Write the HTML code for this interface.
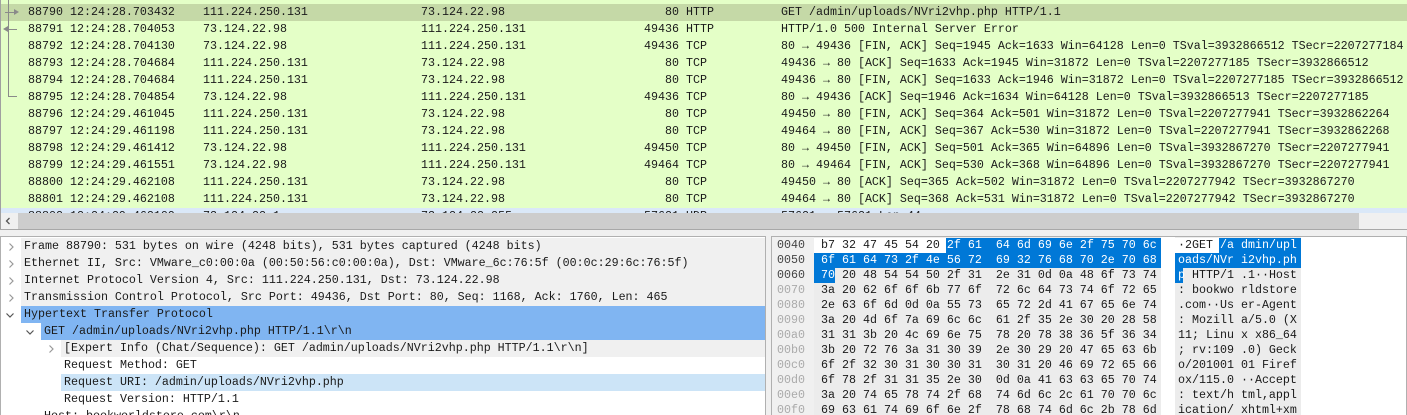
<!DOCTYPE html>
<html><head><meta charset="utf-8"><style>
*{margin:0;padding:0;box-sizing:border-box}
body{width:1407px;height:415px;overflow:hidden;background:#f0f0f0;font-family:"Liberation Mono",monospace;font-size:11.67px;color:#1a1a1a;position:relative}
.a{position:absolute;white-space:pre;line-height:17px}
.pl{position:absolute;left:0;top:0;width:1407px;height:213px;background:#e4ffc7;overflow:hidden;border-left:1px solid #a0a0a0}
.r{position:absolute;left:0;width:1407px;height:17px}
.r span{position:absolute;top:0;white-space:pre;line-height:17px}
.port{text-align:right;width:60px;left:618px}
.dp{position:absolute;left:0;top:236px;width:766px;height:179px;background:#fff;border:1px solid #b0b0b0;border-bottom:none;overflow:hidden}
.dr{position:absolute;height:17px;line-height:17px;white-space:pre}
.chev{position:absolute;width:8px;height:8px}
.hp{position:absolute;left:771px;top:236px;width:636px;height:179px;background:#fff;border:1px solid #b0b0b0;border-bottom:none;overflow:hidden}
.hx{position:absolute;white-space:pre;line-height:15px;height:15px}
</style></head><body>
<div class="pl">
<div class="r" style="top:4px;background:#c5d9a7"></div>
<div class="r" style="top:208px;height:5px;background:#dae8f8"></div>
<div style="position:absolute;left:7px;top:0;width:1px;height:97px;background:#8a8a8a"></div>
<div style="position:absolute;left:7px;top:96px;width:9px;height:1px;background:#8a8a8a"></div>
<div style="position:absolute;left:4px;top:12px;width:10px;height:1px;background:#8a8a8a"></div>
<div style="position:absolute;left:13px;top:9px;width:0;height:0;border-left:5px solid #8a8a8a;border-top:3px solid transparent;border-bottom:3px solid transparent"></div>
<div style="position:absolute;left:6px;top:29px;width:10px;height:1px;background:#8a8a8a"></div>
<div style="position:absolute;left:2px;top:26px;width:0;height:0;border-right:5px solid #8a8a8a;border-top:3px solid transparent;border-bottom:3px solid transparent"></div>

<div class="r" style="top:4px"><span style="left:27px">88790 12:24:28.703432</span><span style="left:202px">111.224.250.131</span><span style="left:420px">73.124.22.98</span><span class="port">80</span><span style="left:685px">HTTP</span><span style="left:780px">GET /admin/uploads/NVri2vhp.php HTTP/1.1</span></div>
<div class="r" style="top:21px"><span style="left:27px">88791 12:24:28.704053</span><span style="left:202px">73.124.22.98</span><span style="left:420px">111.224.250.131</span><span class="port">49436</span><span style="left:685px">HTTP</span><span style="left:780px">HTTP/1.0 500 Internal Server Error</span></div>
<div class="r" style="top:38px"><span style="left:27px">88792 12:24:28.704130</span><span style="left:202px">73.124.22.98</span><span style="left:420px">111.224.250.131</span><span class="port">49436</span><span style="left:685px">TCP</span><span style="left:780px">80 → 49436 [FIN, ACK] Seq=1945 Ack=1633 Win=64128 Len=0 TSval=3932866512 TSecr=2207277184</span></div>
<div class="r" style="top:55px"><span style="left:27px">88793 12:24:28.704684</span><span style="left:202px">111.224.250.131</span><span style="left:420px">73.124.22.98</span><span class="port">80</span><span style="left:685px">TCP</span><span style="left:780px">49436 → 80 [ACK] Seq=1633 Ack=1945 Win=31872 Len=0 TSval=2207277185 TSecr=3932866512</span></div>
<div class="r" style="top:72px"><span style="left:27px">88794 12:24:28.704684</span><span style="left:202px">111.224.250.131</span><span style="left:420px">73.124.22.98</span><span class="port">80</span><span style="left:685px">TCP</span><span style="left:780px">49436 → 80 [FIN, ACK] Seq=1633 Ack=1946 Win=31872 Len=0 TSval=2207277185 TSecr=3932866512</span></div>
<div class="r" style="top:89px"><span style="left:27px">88795 12:24:28.704854</span><span style="left:202px">73.124.22.98</span><span style="left:420px">111.224.250.131</span><span class="port">49436</span><span style="left:685px">TCP</span><span style="left:780px">80 → 49436 [ACK] Seq=1946 Ack=1634 Win=64128 Len=0 TSval=3932866513 TSecr=2207277185</span></div>
<div class="r" style="top:106px"><span style="left:27px">88796 12:24:29.461045</span><span style="left:202px">111.224.250.131</span><span style="left:420px">73.124.22.98</span><span class="port">80</span><span style="left:685px">TCP</span><span style="left:780px">49450 → 80 [FIN, ACK] Seq=364 Ack=501 Win=31872 Len=0 TSval=2207277941 TSecr=3932862264</span></div>
<div class="r" style="top:123px"><span style="left:27px">88797 12:24:29.461198</span><span style="left:202px">111.224.250.131</span><span style="left:420px">73.124.22.98</span><span class="port">80</span><span style="left:685px">TCP</span><span style="left:780px">49464 → 80 [FIN, ACK] Seq=367 Ack=530 Win=31872 Len=0 TSval=2207277941 TSecr=3932862268</span></div>
<div class="r" style="top:140px"><span style="left:27px">88798 12:24:29.461412</span><span style="left:202px">73.124.22.98</span><span style="left:420px">111.224.250.131</span><span class="port">49450</span><span style="left:685px">TCP</span><span style="left:780px">80 → 49450 [FIN, ACK] Seq=501 Ack=365 Win=64896 Len=0 TSval=3932867270 TSecr=2207277941</span></div>
<div class="r" style="top:157px"><span style="left:27px">88799 12:24:29.461551</span><span style="left:202px">73.124.22.98</span><span style="left:420px">111.224.250.131</span><span class="port">49464</span><span style="left:685px">TCP</span><span style="left:780px">80 → 49464 [FIN, ACK] Seq=530 Ack=368 Win=64896 Len=0 TSval=3932867270 TSecr=2207277941</span></div>
<div class="r" style="top:174px"><span style="left:27px">88800 12:24:29.462108</span><span style="left:202px">111.224.250.131</span><span style="left:420px">73.124.22.98</span><span class="port">80</span><span style="left:685px">TCP</span><span style="left:780px">49450 → 80 [ACK] Seq=365 Ack=502 Win=31872 Len=0 TSval=2207277942 TSecr=3932867270</span></div>
<div class="r" style="top:191px"><span style="left:27px">88801 12:24:29.462108</span><span style="left:202px">111.224.250.131</span><span style="left:420px">73.124.22.98</span><span class="port">80</span><span style="left:685px">TCP</span><span style="left:780px">49464 → 80 [ACK] Seq=368 Ack=531 Win=31872 Len=0 TSval=2207277942 TSecr=3932867270</span></div>
<div class="r" style="top:208px"><span style="left:27px">88802 12:24:29.462109</span><span style="left:202px">73.124.22.1</span><span style="left:420px">73.124.22.255</span><span class="port">57621</span><span style="left:685px">UDP</span><span style="left:780px">57621 → 57621 Len=44</span></div>
</div>
<div style="position:absolute;left:0;top:213px;width:1407px;height:16px;background:#f0f0f0;border-left:1px solid #a0a0a0"></div>
<div style="position:absolute;left:18px;top:213px;width:1341px;height:16px;background:#cdcdcd"></div>
<svg style="position:absolute;left:4px;top:217px" width="8" height="8"><path d="M5.5 1 L2.5 4 L5.5 7" fill="none" stroke="#555" stroke-width="1.3"/></svg>
<div style="position:absolute;left:0;top:229px;width:1407px;height:1px;background:#a8a8a8"></div>

<div class="dp">
<div class="dr" style="left:20px;top:1px;width:746px;background:#f0f0f0"></div>
<div class="dr" style="left:20px;top:18px;width:746px;background:#f0f0f0"></div>
<div class="dr" style="left:20px;top:35px;width:746px;background:#f0f0f0"></div>
<div class="dr" style="left:20px;top:52px;width:746px;background:#f0f0f0"></div>
<div class="dr" style="left:20px;top:69px;width:746px;background:#80b5f2"></div>
<div class="dr" style="left:40px;top:86px;width:726px;background:#80b5f2"></div>
<div class="dr" style="left:60px;top:103px;width:706px;background:#f0f0f0"></div>
<div class="dr" style="left:60px;top:137px;width:706px;background:#cce4f7"></div>
<svg class="chev" style="left:6px;top:6px"><path d="M2.5 0.5 L6 4 L2.5 7.5" fill="none" stroke="#999" stroke-width="1.2"/></svg>
<svg class="chev" style="left:6px;top:23px"><path d="M2.5 0.5 L6 4 L2.5 7.5" fill="none" stroke="#999" stroke-width="1.2"/></svg>
<svg class="chev" style="left:6px;top:40px"><path d="M2.5 0.5 L6 4 L2.5 7.5" fill="none" stroke="#999" stroke-width="1.2"/></svg>
<svg class="chev" style="left:6px;top:57px"><path d="M2.5 0.5 L6 4 L2.5 7.5" fill="none" stroke="#999" stroke-width="1.2"/></svg>
<svg class="chev" style="left:5px;top:74px"><path d="M0.5 2.5 L4 6 L7.5 2.5" fill="none" stroke="#555" stroke-width="1.2"/></svg>
<svg class="chev" style="left:25px;top:91px"><path d="M0.5 2.5 L4 6 L7.5 2.5" fill="none" stroke="#555" stroke-width="1.2"/></svg>
<svg class="chev" style="left:46px;top:108px"><path d="M2.5 0.5 L6 4 L2.5 7.5" fill="none" stroke="#999" stroke-width="1.2"/></svg>
<div class="dr" style="left:23px;top:1px">Frame 88790: 531 bytes on wire (4248 bits), 531 bytes captured (4248 bits)</div>
<div class="dr" style="left:23px;top:18px">Ethernet II, Src: VMware_c0:00:0a (00:50:56:c0:00:0a), Dst: VMware_6c:76:5f (00:0c:29:6c:76:5f)</div>
<div class="dr" style="left:23px;top:35px">Internet Protocol Version 4, Src: 111.224.250.131, Dst: 73.124.22.98</div>
<div class="dr" style="left:23px;top:52px">Transmission Control Protocol, Src Port: 49436, Dst Port: 80, Seq: 1168, Ack: 1760, Len: 465</div>
<div class="dr" style="left:23px;top:69px">Hypertext Transfer Protocol</div>
<div class="dr" style="left:43px;top:86px">GET /admin/uploads/NVri2vhp.php HTTP/1.1\r\n</div>
<div class="dr" style="left:63px;top:103px">[Expert Info (Chat/Sequence): GET /admin/uploads/NVri2vhp.php HTTP/1.1\r\n]</div>
<div class="dr" style="left:63px;top:120px">Request Method: GET</div>
<div class="dr" style="left:63px;top:137px">Request URI: /admin/uploads/NVri2vhp.php</div>
<div class="dr" style="left:63px;top:154px">Request Version: HTTP/1.1</div>
<div class="dr" style="left:43px;top:171px">Host: bookworldstore.com\r\n</div>
</div>

<div class="hp">
<div style="position:absolute;left:0;top:0;width:42px;height:179px;background:#f0f0f0"></div>
<div style="position:absolute;left:42px;top:0;width:347px;height:179px;background:#ececec"></div>
<div style="position:absolute;left:403px;top:0;width:126px;height:179px;background:#ececec"></div>
<div style="position:absolute;left:42px;top:1px;width:134px;height:15px;background:#fff"></div>
<div style="position:absolute;left:403px;top:1px;width:46px;height:15px;background:#fff"></div>
<div style="position:absolute;left:174px;top:1px;width:215px;height:15px;background:#0078d7"></div>
<div style="position:absolute;left:42px;top:16px;width:347px;height:15px;background:#0078d7"></div>
<div style="position:absolute;left:42px;top:31px;width:21px;height:15px;background:#0078d7"></div>
<div style="position:absolute;left:447px;top:1px;width:82px;height:15px;background:#0078d7"></div>
<div style="position:absolute;left:403px;top:16px;width:126px;height:15px;background:#0078d7"></div>
<div style="position:absolute;left:403px;top:31px;width:8px;height:15px;background:#0078d7"></div>
<div class="hx" style="left:5px;top:1px;color:#444">0040</div>
<div class="hx" style="left:5px;top:16px;color:#444">0050</div>
<div class="hx" style="left:5px;top:31px;color:#444">0060</div>
<div class="hx" style="left:5px;top:46px;color:#aaa">0070</div>
<div class="hx" style="left:5px;top:61px;color:#aaa">0080</div>
<div class="hx" style="left:5px;top:76px;color:#aaa">0090</div>
<div class="hx" style="left:5px;top:91px;color:#aaa">00a0</div>
<div class="hx" style="left:5px;top:106px;color:#aaa">00b0</div>
<div class="hx" style="left:5px;top:121px;color:#aaa">00c0</div>
<div class="hx" style="left:5px;top:136px;color:#aaa">00d0</div>
<div class="hx" style="left:5px;top:151px;color:#aaa">00e0</div>
<div class="hx" style="left:5px;top:166px;color:#aaa">00f0</div>
<div class="hx" style="left:49px;top:1px">b7 32 47 45 54 20 <span style="color:#fff">2f 61  64 6d 69 6e 2f 75 70 6c</span></div>
<div class="hx" style="left:49px;top:16px;color:#fff">6f 61 64 73 2f 4e 56 72  69 32 76 68 70 2e 70 68</div>
<div class="hx" style="left:49px;top:31px"><span style="color:#fff">70</span> 20 48 54 54 50 2f 31  2e 31 0d 0a 48 6f 73 74</div>
<div class="hx" style="left:49px;top:46px">3a 20 62 6f 6f 6b 77 6f  72 6c 64 73 74 6f 72 65</div>
<div class="hx" style="left:49px;top:61px">2e 63 6f 6d 0d 0a 55 73  65 72 2d 41 67 65 6e 74</div>
<div class="hx" style="left:49px;top:76px">3a 20 4d 6f 7a 69 6c 6c  61 2f 35 2e 30 20 28 58</div>
<div class="hx" style="left:49px;top:91px">31 31 3b 20 4c 69 6e 75  78 20 78 38 36 5f 36 34</div>
<div class="hx" style="left:49px;top:106px">3b 20 72 76 3a 31 30 39  2e 30 29 20 47 65 63 6b</div>
<div class="hx" style="left:49px;top:121px">6f 2f 32 30 31 30 30 31  30 31 20 46 69 72 65 66</div>
<div class="hx" style="left:49px;top:136px">6f 78 2f 31 31 35 2e 30  0d 0a 41 63 63 65 70 74</div>
<div class="hx" style="left:49px;top:151px">3a 20 74 65 78 74 2f 68  74 6d 6c 2c 61 70 70 6c</div>
<div class="hx" style="left:49px;top:166px">69 63 61 74 69 6f 6e 2f  78 68 74 6d 6c 2b 78 6d</div>
<div class="hx" style="left:406px;top:1px">·2GET <span style="color:#fff">/a dmin/upl</span></div>
<div class="hx" style="left:406px;top:16px;color:#fff">oads/NVr i2vhp.ph</div>
<div class="hx" style="left:406px;top:31px"><span style="color:#fff">p</span> HTTP/1 .1··Host</div>
<div class="hx" style="left:406px;top:46px">: bookwo rldstore</div>
<div class="hx" style="left:406px;top:61px">.com··Us er-Agent</div>
<div class="hx" style="left:406px;top:76px">: Mozill a/5.0 (X</div>
<div class="hx" style="left:406px;top:91px">11; Linu x x86_64</div>
<div class="hx" style="left:406px;top:106px">; rv:109 .0) Geck</div>
<div class="hx" style="left:406px;top:121px">o/201001 01 Firef</div>
<div class="hx" style="left:406px;top:136px">ox/115.0 ··Accept</div>
<div class="hx" style="left:406px;top:151px">: text/h tml,appl</div>
<div class="hx" style="left:406px;top:166px">ication/ xhtml+xm</div>
</div>
</body></html>
